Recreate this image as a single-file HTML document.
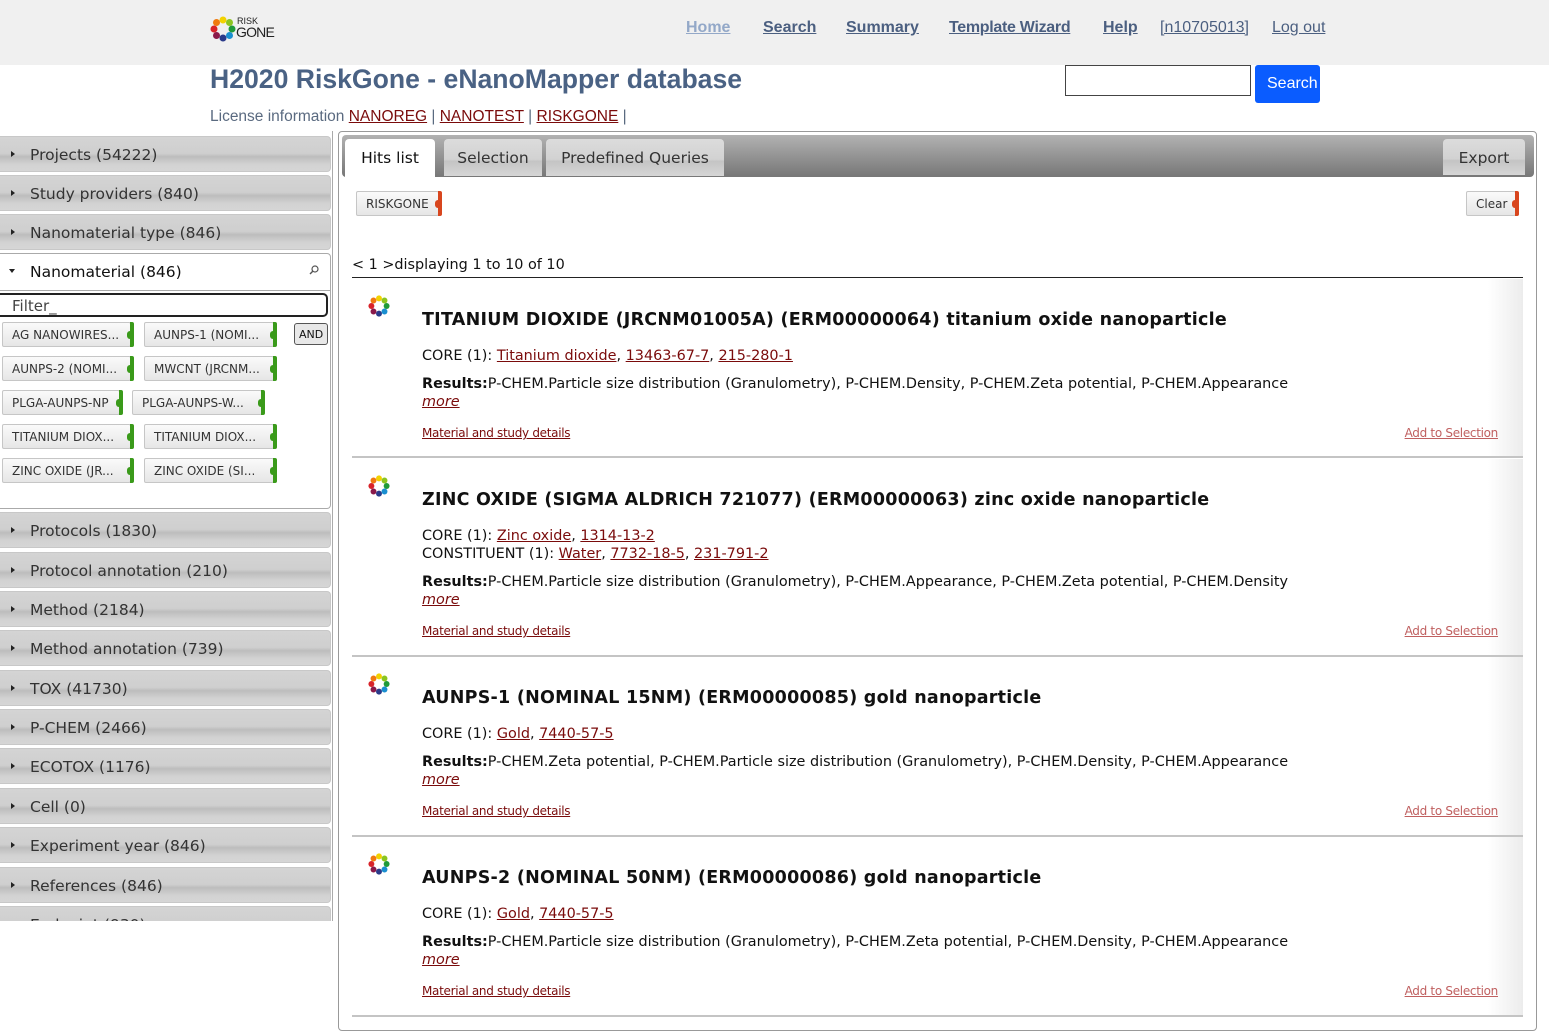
<!DOCTYPE html>
<html><head><meta charset="utf-8">
<style>
*{box-sizing:border-box;margin:0;padding:0}
body{width:1549px;height:1025px;overflow:hidden;background:#fff;position:relative;font-family:"DejaVu Sans",Verdana,sans-serif;color:#111}
.a{position:absolute;white-space:nowrap}
.hdr{position:absolute;left:0;top:0;width:1549px;height:65px;background:#f0f0f0}
.nav{font-family:"Liberation Sans",Arial,sans-serif;font-size:16px;font-weight:bold;color:#4b5f80;text-decoration:underline;top:19px}
.row{position:absolute;left:0;width:331px;height:36px;border-radius:0 4px 4px 0;border:1px solid #c8c8c8;border-left:none;background:linear-gradient(#d4d4d4 0%,#cfcfcf 48%,#bdbdbd 58%,#d2d2d2 80%,#d6d6d6 100%);font-size:15.5px;color:#333;padding:9px 0 0 30px;white-space:nowrap}
.row:before{content:"";position:absolute;left:11px;top:14px;border-left:4px solid #222;border-top:3.5px solid transparent;border-bottom:3.5px solid transparent}
.tag{position:absolute;height:25px;border:1px solid #c6c6c6;border-radius:2px;background:linear-gradient(#fafafa,#e6e6e6);font-size:12px;color:#333;padding:5px 0 0 9px;white-space:nowrap}
.tag:after{content:"";position:absolute;right:-4px;top:-1px;width:4px;height:25px;background:#3a9a1a;border-radius:0 2px 2px 0}
.tag:before{content:"";position:absolute;right:0;top:8px;width:3px;height:8px;background:#3a9a1a;border-radius:3px 0 0 3px}
.tag.r:after,.tag.r:before{background:#d8461e}
a{color:#7a0b0b}
.item{position:absolute;left:352px;width:1171px;border-bottom:2px solid #c4c4c4;background:linear-gradient(90deg,#fff 0,#fff 97%,#ececec 100%)}
.ttl{position:absolute;left:70px;font-size:17.5px;font-weight:bold;color:#111;white-space:nowrap;letter-spacing:0.25px}
.ln{position:absolute;left:70px;font-size:14.4px;white-space:nowrap}
.sm{position:absolute;font-size:12px;white-space:nowrap;letter-spacing:-0.3px}
.tab{position:absolute;top:139px;height:37px;border-radius:4px 4px 0 0;font-size:15.5px;color:#333;padding-top:10px;text-align:center;background:linear-gradient(#dcdcdc,#d2d2d2 55%,#c4c4c4 60%,#d6d6d6)}
</style></head><body>
<div class="hdr"></div>
<svg class="a" style="left:210px;top:16px" width="26" height="26" viewBox="0 0 26 26">
<g>
<circle cx="13" cy="4" r="3.5" fill="#f2d200"/><circle cx="19.5" cy="6.5" r="3.5" fill="#8cc520"/><circle cx="22" cy="13" r="3.5" fill="#1f9a3a"/><circle cx="19.5" cy="19.5" r="3.5" fill="#1a8fd0"/><circle cx="13" cy="22" r="3.5" fill="#2a3a8a"/><circle cx="6.5" cy="19.5" r="3.5" fill="#8a1a4a"/><circle cx="4" cy="13" r="3.5" fill="#d8232a"/><circle cx="6.5" cy="6.5" r="3.5" fill="#f07a10"/>
</g></svg>
<div class="a" style="left:237px;top:17px;font-family:'Liberation Sans',sans-serif;font-size:9px;color:#222;line-height:9px">RISK</div>
<div class="a" style="left:236px;top:25px;font-family:'Liberation Sans',sans-serif;font-size:14px;color:#222;letter-spacing:-0.8px;line-height:15px">GONE</div>
<div class="a nav" style="left:686px;color:#93a8c8">Home</div>
<div class="a nav" style="left:763px">Search</div>
<div class="a nav" style="left:846px">Summary</div>
<div class="a nav" style="left:949px;letter-spacing:-0.3px">Template Wizard</div>
<div class="a nav" style="left:1103px">Help</div>
<div class="a nav" style="left:1160px;font-weight:normal">[n10705013]</div>
<div class="a nav" style="left:1272px;font-weight:normal">Log out</div>
<div class="a" style="left:210px;top:64px;font-family:'Liberation Sans',sans-serif;font-size:26.6px;font-weight:bold;color:#4a6284">H2020 RiskGone - eNanoMapper database</div>
<div class="a" style="left:210px;top:108px;font-family:'Liberation Sans',sans-serif;font-size:15.5px;color:#5a6a80">License information <a href="#" style="color:#7a0b0b">NANOREG</a> | <a href="#">NANOTEST</a> | <a href="#">RISKGONE</a> |</div>
<div class="a" style="left:1065px;top:65px;width:186px;height:31px;border:1px solid #444;background:#fff"></div>
<div class="a" style="left:1255px;top:65px;width:65px;height:38px;border-radius:3px;background:#0a5cff;color:#fff;font-family:'Liberation Sans',sans-serif;font-size:16px;padding:10px 0 0 12px">Search</div>

<!-- sidebar -->
<div class="a" style="left:0;top:131px;width:333px;height:790px;border-right:1px solid #aaa;overflow:hidden"></div>
<div class="row" style="top:136px">Projects (54222)</div>
<div class="row" style="top:175px">Study providers (840)</div>
<div class="row" style="top:214px">Nanomaterial type (846)</div>
<div class="a" style="left:0;top:253px;width:331px;height:256px;border:1px solid #aaa;border-left:none;border-radius:0 4px 4px 0;background:#fff"></div>
<div class="a" style="left:0;top:253px;width:331px;height:38px;border-bottom:1px solid #aaa;font-size:15.5px;color:#111;padding:10px 0 0 30px">Nanomaterial (846)</div>
<div class="a" style="left:9px;top:269px;border-top:4px solid #222;border-left:3.5px solid transparent;border-right:3.5px solid transparent"></div>
<svg class="a" style="left:309px;top:265px" width="10" height="10" viewBox="0 0 10 10"><circle cx="6" cy="4" r="3" fill="none" stroke="#555" stroke-width="1.2"/><line x1="4" y1="6" x2="1" y2="9" stroke="#555" stroke-width="1.4"/></svg>
<div class="a" style="left:0;top:293px;width:328px;height:24px;border:2px solid #222;border-left:none;border-radius:0 5px 5px 0;font-size:15px;color:#444;padding:2px 0 0 12px">Filter_</div>
<div class="tag" style="left:2px;top:322px;width:129px">AG NANOWIRES...</div>
<div class="tag" style="left:144px;top:322px;width:130px">AUNPS-1 (NOMI...</div>
<div class="a" style="left:294px;top:323px;width:34px;height:22px;border:1px solid #555;border-radius:3px;background:#e8e8e8;font-size:11px;padding:4px 0 0 4px">AND</div>
<div class="tag" style="left:2px;top:356px;width:129px">AUNPS-2 (NOMI...</div>
<div class="tag" style="left:144px;top:356px;width:130px">MWCNT (JRCNM...</div>
<div class="tag" style="left:2px;top:390px;width:118px">PLGA-AUNPS-NP</div>
<div class="tag" style="left:132px;top:390px;width:130px">PLGA-AUNPS-W...</div>
<div class="tag" style="left:2px;top:424px;width:129px">TITANIUM DIOX...</div>
<div class="tag" style="left:144px;top:424px;width:130px">TITANIUM DIOX...</div>
<div class="tag" style="left:2px;top:458px;width:129px">ZINC OXIDE (JR...</div>
<div class="tag" style="left:144px;top:458px;width:130px">ZINC OXIDE (SI...</div>
<div class="row" style="top:512px">Protocols (1830)</div>
<div class="row" style="top:552px">Protocol annotation (210)</div>
<div class="row" style="top:591px">Method (2184)</div>
<div class="row" style="top:630px">Method annotation (739)</div>
<div class="row" style="top:670px">TOX (41730)</div>
<div class="row" style="top:709px">P-CHEM (2466)</div>
<div class="row" style="top:748px">ECOTOX (1176)</div>
<div class="row" style="top:788px">Cell (0)</div>
<div class="row" style="top:827px">Experiment year (846)</div>
<div class="row" style="top:867px">References (846)</div>
<div class="a" style="left:0;top:906px;width:333px;height:15px;overflow:hidden"><div class="row" style="top:0">Endpoint (930)</div></div>
<div class="a" style="left:0;top:921px;width:336px;height:104px;background:#fff"></div>

<!-- right panel -->
<div class="a" style="left:338px;top:131px;width:1199px;height:900px;border:1px solid #999;border-radius:4px"></div>
<div class="a" style="left:342px;top:135px;width:1192px;height:42px;border-radius:4px;background:linear-gradient(#b2b2b2,#8e8e8e 60%,#777)"></div>
<div class="tab" style="left:345px;width:90px;background:#fff;color:#111;height:38px">Hits list</div>
<div class="tab" style="left:444px;width:98px">Selection</div>
<div class="tab" style="left:546px;width:178px">Predefined Queries</div>
<div class="tab" style="left:1443px;width:82px;height:36px">Export</div>
<div class="tag r" style="left:356px;top:191px;width:83px">RISKGONE</div>
<div class="tag r" style="left:1466px;top:191px;width:50px">Clear</div>
<div class="a" style="left:352px;top:257px;font-size:14.4px">&lt; 1 &gt;displaying 1 to 10 of 10</div>
<div class="a" style="left:352px;top:277px;width:1171px;height:1px;background:#222"></div>

<!-- items -->
<div class="item" style="top:279px;height:179px">
<svg class="a" style="left:16px;top:16px" width="22" height="22" viewBox="0 0 26 26"><circle cx="13" cy="4" r="3.5" fill="#f2d200"/><circle cx="19.5" cy="6.5" r="3.5" fill="#8cc520"/><circle cx="22" cy="13" r="3.5" fill="#1f9a3a"/><circle cx="19.5" cy="19.5" r="3.5" fill="#1a8fd0"/><circle cx="13" cy="22" r="3.5" fill="#2a3a8a"/><circle cx="6.5" cy="19.5" r="3.5" fill="#8a1a4a"/><circle cx="4" cy="13" r="3.5" fill="#d8232a"/><circle cx="6.5" cy="6.5" r="3.5" fill="#f07a10"/></svg>
<div class="ttl" style="top:31px">TITANIUM DIOXIDE (JRCNM01005A) (ERM00000064) titanium oxide nanoparticle</div>
<div class="ln" style="top:69px">CORE (1): <a href="#">Titanium dioxide</a>, <a href="#">13463-67-7</a>, <a href="#">215-280-1</a></div>
<div class="ln" style="top:97px"><b>Results:</b>P-CHEM.Particle size distribution (Granulometry), P-CHEM.Density, P-CHEM.Zeta potential, P-CHEM.Appearance</div>
<div class="ln" style="top:115px"><i><a href="#">more</a></i></div>
<div class="sm" style="left:70px;top:147px"><a href="#">Material and study details</a></div>
<div class="sm" style="right:25px;top:147px"><a href="#" style="color:#c06060">Add to Selection</a></div>
</div>

<div class="item" style="top:459px;height:198px">
<svg class="a" style="left:16px;top:16px" width="22" height="22" viewBox="0 0 26 26"><circle cx="13" cy="4" r="3.5" fill="#f2d200"/><circle cx="19.5" cy="6.5" r="3.5" fill="#8cc520"/><circle cx="22" cy="13" r="3.5" fill="#1f9a3a"/><circle cx="19.5" cy="19.5" r="3.5" fill="#1a8fd0"/><circle cx="13" cy="22" r="3.5" fill="#2a3a8a"/><circle cx="6.5" cy="19.5" r="3.5" fill="#8a1a4a"/><circle cx="4" cy="13" r="3.5" fill="#d8232a"/><circle cx="6.5" cy="6.5" r="3.5" fill="#f07a10"/></svg>
<div class="ttl" style="top:31px">ZINC OXIDE (SIGMA ALDRICH 721077) (ERM00000063) zinc oxide nanoparticle</div>
<div class="ln" style="top:69px">CORE (1): <a href="#">Zinc oxide</a>, <a href="#">1314-13-2</a></div>
<div class="ln" style="top:87px">CONSTITUENT (1): <a href="#">Water</a>, <a href="#">7732-18-5</a>, <a href="#">231-791-2</a></div>
<div class="ln" style="top:115px"><b>Results:</b>P-CHEM.Particle size distribution (Granulometry), P-CHEM.Appearance, P-CHEM.Zeta potential, P-CHEM.Density</div>
<div class="ln" style="top:133px"><i><a href="#">more</a></i></div>
<div class="sm" style="left:70px;top:165px"><a href="#">Material and study details</a></div>
<div class="sm" style="right:25px;top:165px"><a href="#" style="color:#c06060">Add to Selection</a></div>
</div>

<div class="item" style="top:657px;height:180px">
<svg class="a" style="left:16px;top:16px" width="22" height="22" viewBox="0 0 26 26"><circle cx="13" cy="4" r="3.5" fill="#f2d200"/><circle cx="19.5" cy="6.5" r="3.5" fill="#8cc520"/><circle cx="22" cy="13" r="3.5" fill="#1f9a3a"/><circle cx="19.5" cy="19.5" r="3.5" fill="#1a8fd0"/><circle cx="13" cy="22" r="3.5" fill="#2a3a8a"/><circle cx="6.5" cy="19.5" r="3.5" fill="#8a1a4a"/><circle cx="4" cy="13" r="3.5" fill="#d8232a"/><circle cx="6.5" cy="6.5" r="3.5" fill="#f07a10"/></svg>
<div class="ttl" style="top:31px">AUNPS-1 (NOMINAL 15NM) (ERM00000085) gold nanoparticle</div>
<div class="ln" style="top:69px">CORE (1): <a href="#">Gold</a>, <a href="#">7440-57-5</a></div>
<div class="ln" style="top:97px"><b>Results:</b>P-CHEM.Zeta potential, P-CHEM.Particle size distribution (Granulometry), P-CHEM.Density, P-CHEM.Appearance</div>
<div class="ln" style="top:115px"><i><a href="#">more</a></i></div>
<div class="sm" style="left:70px;top:147px"><a href="#">Material and study details</a></div>
<div class="sm" style="right:25px;top:147px"><a href="#" style="color:#c06060">Add to Selection</a></div>
</div>

<div class="item" style="top:837px;height:180px">
<svg class="a" style="left:16px;top:16px" width="22" height="22" viewBox="0 0 26 26"><circle cx="13" cy="4" r="3.5" fill="#f2d200"/><circle cx="19.5" cy="6.5" r="3.5" fill="#8cc520"/><circle cx="22" cy="13" r="3.5" fill="#1f9a3a"/><circle cx="19.5" cy="19.5" r="3.5" fill="#1a8fd0"/><circle cx="13" cy="22" r="3.5" fill="#2a3a8a"/><circle cx="6.5" cy="19.5" r="3.5" fill="#8a1a4a"/><circle cx="4" cy="13" r="3.5" fill="#d8232a"/><circle cx="6.5" cy="6.5" r="3.5" fill="#f07a10"/></svg>
<div class="ttl" style="top:31px">AUNPS-2 (NOMINAL 50NM) (ERM00000086) gold nanoparticle</div>
<div class="ln" style="top:69px">CORE (1): <a href="#">Gold</a>, <a href="#">7440-57-5</a></div>
<div class="ln" style="top:97px"><b>Results:</b>P-CHEM.Particle size distribution (Granulometry), P-CHEM.Zeta potential, P-CHEM.Density, P-CHEM.Appearance</div>
<div class="ln" style="top:115px"><i><a href="#">more</a></i></div>
<div class="sm" style="left:70px;top:147px"><a href="#">Material and study details</a></div>
<div class="sm" style="right:25px;top:147px"><a href="#" style="color:#c06060">Add to Selection</a></div>
</div>
</body></html>
